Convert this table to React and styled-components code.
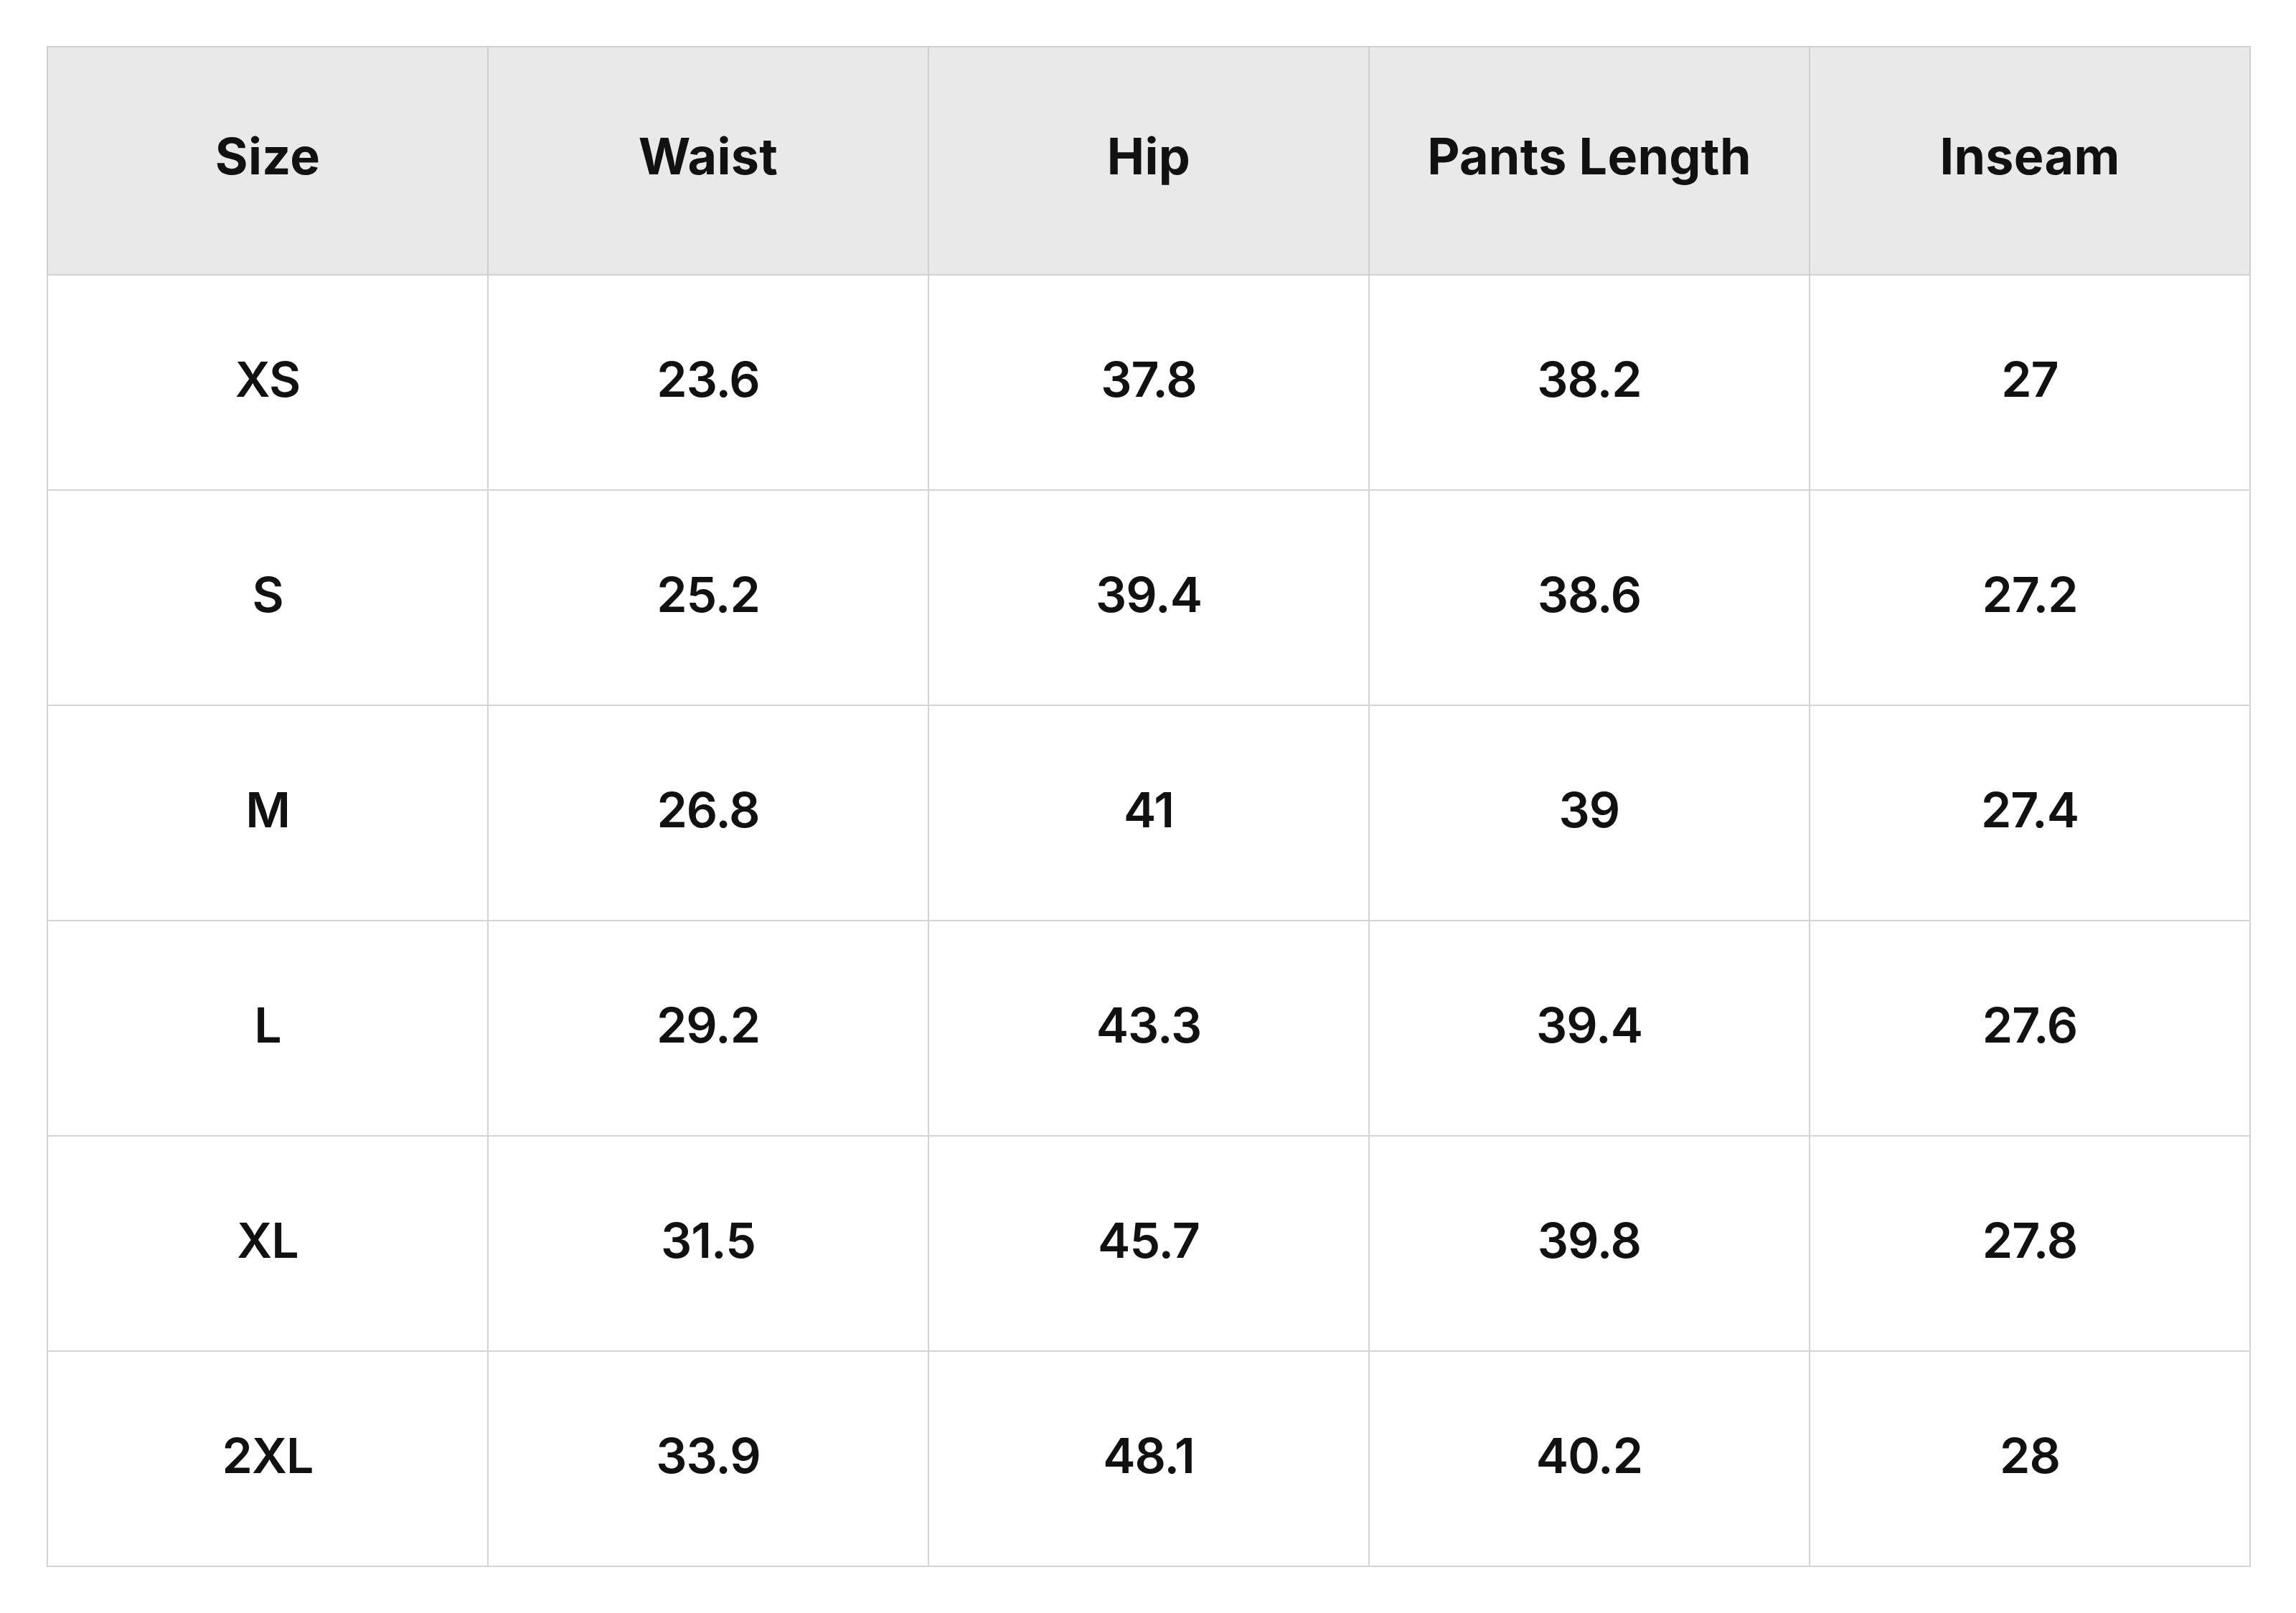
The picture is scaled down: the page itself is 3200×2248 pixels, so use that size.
import React from "react";
import styled, { createGlobalStyle } from "styled-components";

const Global = createGlobalStyle`
  html, body { margin: 0; padding: 0; background: #ffffff; }
  body { font-family: Inter, "Noto Sans", "Liberation Sans", sans-serif; color: #111111; }
`;

const Page = styled.div`
  padding: 64px 63px 62px 65px;
  background: #ffffff;
`;

const Table = styled.table`
  width: 100%;
  border-collapse: collapse;
  table-layout: fixed;
  border: 2px solid #cdcdcd;
`;

const HeadCell = styled.th`
  box-sizing: border-box;
  height: 318px;
  background: #e9e9e9;
  border: 2px solid #cfcfcf;
  font-size: 70px;
  font-weight: 700;
  letter-spacing: 0.3px;
  text-align: center;
  vertical-align: middle;
  color: #111111;
  padding: 0 0 14px;
`;

const Cell = styled.td`
  box-sizing: border-box;
  height: 300px;
  border: 2px solid #d4d4d4;
  font-size: 68px;
  font-weight: 600;
  letter-spacing: -1px;
  text-align: center;
  vertical-align: middle;
  color: #111111;
  padding: 0 0 10px;
`;

const headers = ["Size", "Waist", "Hip", "Pants Length", "Inseam"];
const rows = [
  ["XS", "23.6", "37.8", "38.2", "27"],
  ["S", "25.2", "39.4", "38.6", "27.2"],
  ["M", "26.8", "41", "39", "27.4"],
  ["L", "29.2", "43.3", "39.4", "27.6"],
  ["XL", "31.5", "45.7", "39.8", "27.8"],
  ["2XL", "33.9", "48.1", "40.2", "28"],
];

export default function App() {
  return (
    <>
      <Global />
      <Page>
        <Table>
          <thead>
            <tr>
              {headers.map((h) => (
                <HeadCell key={h}>{h}</HeadCell>
              ))}
            </tr>
          </thead>
          <tbody>
            {rows.map((r) => (
              <tr key={r[0]}>
                {r.map((v, i) => (
                  <Cell key={i}>{v}</Cell>
                ))}
              </tr>
            ))}
          </tbody>
        </Table>
      </Page>
    </>
  );
}
